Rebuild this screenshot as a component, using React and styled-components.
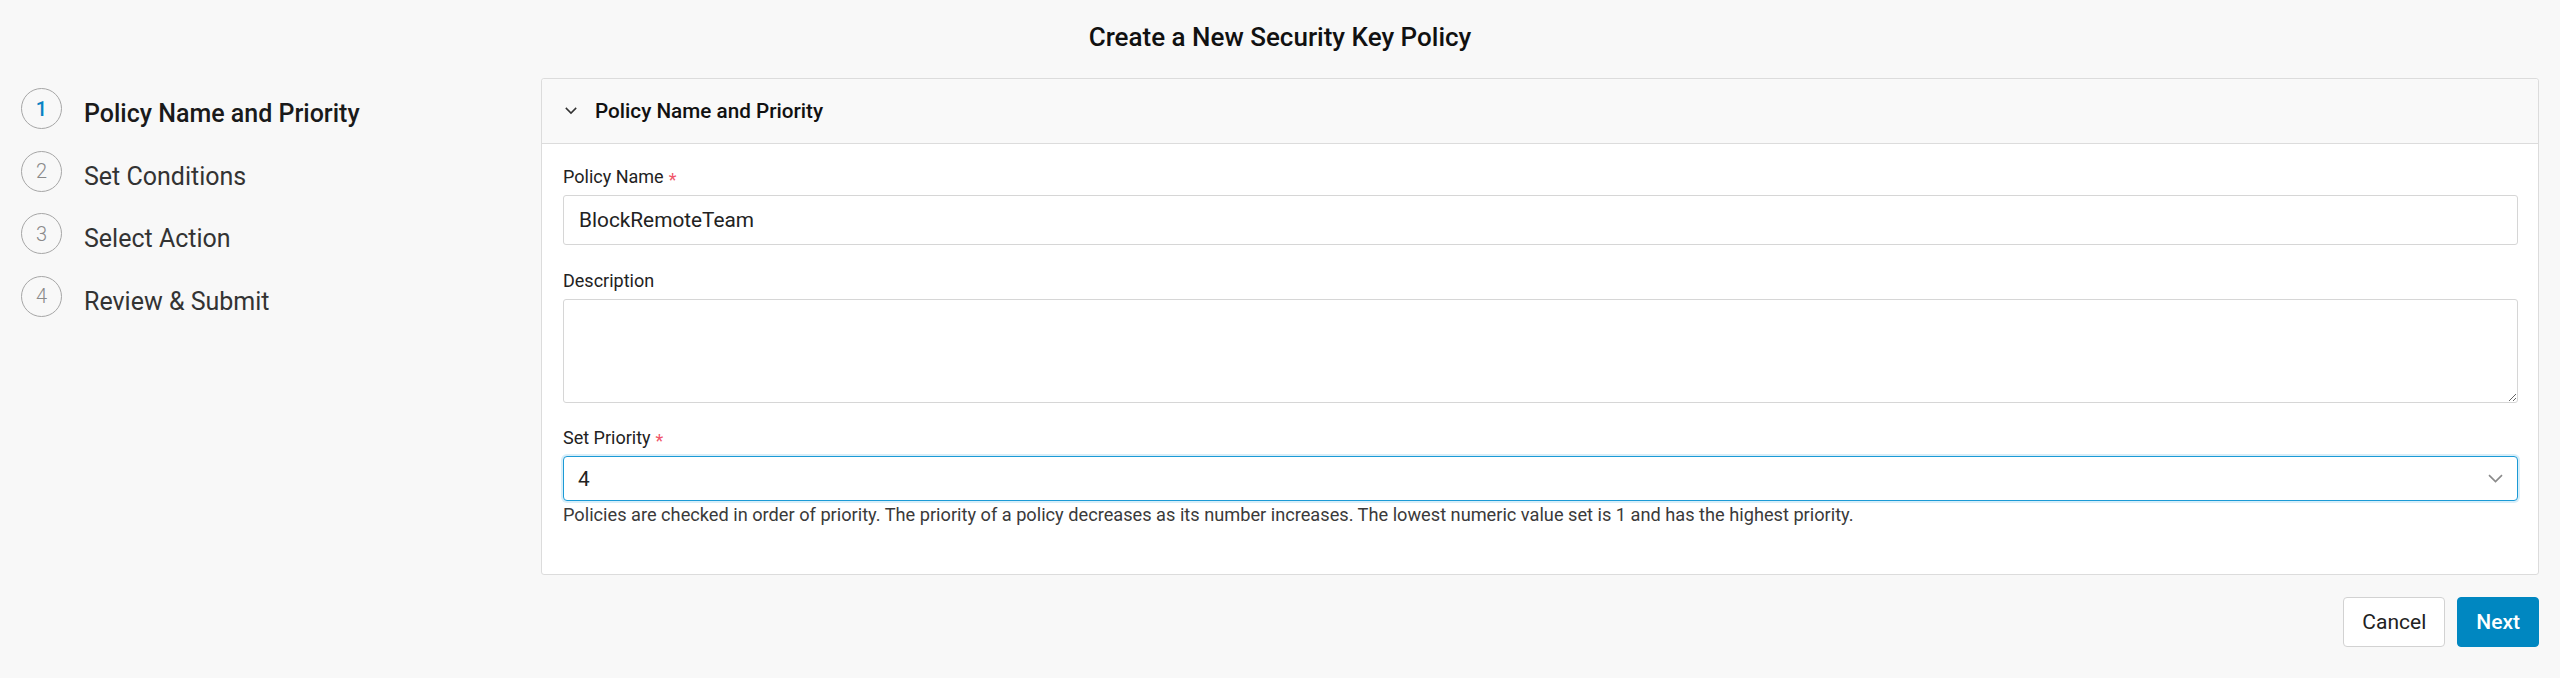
import React from "react";
import styled, { createGlobalStyle } from "styled-components";

const Global = createGlobalStyle`
  * { box-sizing: border-box; }
  html, body { margin: 0; padding: 0; background: #f8f8f8; }
  body { font-family: Roboto, "Liberation Sans", Arial, sans-serif; color: #222; }
`;

const Page = styled.div`
  width: 2560px;
  min-height: 678px;
  background: #f8f8f8;
`;

const TitleBar = styled.header`
  height: 78px;
  display: flex;
  align-items: center;
  justify-content: center;
  padding-bottom: 4px;
`;

const Title = styled.h1`
  margin: 0;
  font-size: 26px;
  font-weight: 500;
  color: #111;
  line-height: 32px;
`;

const Main = styled.div`
  display: grid;
  grid-template-columns: 541px 1fr;
  padding-right: 21px;
`;

const Steps = styled.ol`
  list-style: none;
  margin: 0;
  padding: 10px 0 0 21px;
  display: flex;
  flex-direction: column;
  gap: 21.6px;
`;

const Step = styled.li`
  display: flex;
  align-items: flex-start;
  height: 41px;
  gap: 22px;
  font-size: 25px;
  line-height: 41px;
  color: ${(p) => (p.$active ? "#1a1a1a" : "#333")};
  font-weight: ${(p) => (p.$active ? 500 : 400)};
`;

const StepLabel = styled.span`
  padding-top: 5px;
`;

const StepNum = styled.span`
  width: 41px;
  height: 41px;
  border-radius: 50%;
  border: 1px solid #a6a6a6;
  display: flex;
  align-items: center;
  justify-content: center;
  font-size: 20px;
  line-height: 1;
  font-weight: ${(p) => (p.$active ? 500 : 300)};
  color: ${(p) => (p.$active ? "#0a82c4" : "#8a8a8a")};
  flex: none;
`;

const Right = styled.div`
  display: flex;
  flex-direction: column;
`;

const Panel = styled.section`
  background: #fff;
  border: 1px solid #dcdcdc;
  border-radius: 3px;
`;

const PanelHeader = styled.div`
  height: 65px;
  background: #f9f9f9;
  border-bottom: 1px solid #dcdcdc;
  display: flex;
  align-items: center;
  padding-left: 23px;
  gap: 18px;
  font-size: 20.7px;
  font-weight: 500;
  color: #111;
  border-radius: 3px 3px 0 0;
`;

const PanelBody = styled.div`
  padding: 21px 20px 48px 21px;
  display: flex;
  flex-direction: column;
`;

const Field = styled.div`
  display: flex;
  flex-direction: column;
  gap: 6px;
  margin-bottom: ${(p) => p.$mb || 0}px;
`;

const Label = styled.label`
  font-size: 18px;
  line-height: 24px;
  color: #222;
  display: flex;
  align-items: center;
  gap: 5px;
`;

const Req = styled.span`
  color: #f0566a;
  font-size: 18px;
  line-height: 1;
  position: relative;
  top: 3px;
`;

const TextInput = styled.input`
  height: 50px;
  border: 1px solid #d6d6d6;
  border-radius: 3px;
  padding: 0 15px;
  font-family: inherit;
  font-size: 20.8px;
  color: #222;
  background: #fff;
  outline: none;
`;

const TextArea = styled.textarea`
  height: 104px;
  border: 1px solid #d6d6d6;
  border-radius: 3px;
  font-family: inherit;
  font-size: 20px;
  padding: 10px 15px;
  resize: vertical;
  outline: none;
`;

const SelectBox = styled.div`
  height: 45px;
  border: 1px solid #1b9ad6;
  border-radius: 4px;
  box-shadow: 0 0 0 2px rgba(40, 160, 220, 0.18);
  display: flex;
  align-items: center;
  justify-content: space-between;
  padding: 0 14px 0 14px;
  font-size: 20.8px;
  color: #222;
  background: #fff;
`;

const Help = styled.p`
  margin: 0;
  font-size: 18.2px;
  line-height: 22px;
  color: #3a3a3a;
  padding-top: 3px;
`;

const Actions = styled.div`
  display: flex;
  justify-content: flex-end;
  gap: 12px;
  padding-top: 22px;
`;

const Button = styled.button`
  height: 50px;
  padding: 0 18px;
  border-radius: 4px;
  font-family: inherit;
  font-size: 21px;
  border: 1px solid ${(p) => (p.$primary ? "#0087c1" : "#d2d2d2")};
  background: ${(p) => (p.$primary ? "#0087c1" : "#fff")};
  color: ${(p) => (p.$primary ? "#fff" : "#222")};
  font-weight: ${(p) => (p.$primary ? 500 : 400)};
  cursor: pointer;
`;

const Chevron = ({ size = 12, color = "#333", width = 1.6 }) => (
  <svg width={size} height={size * 0.6} viewBox="0 0 12 7" fill="none">
    <path d="M0.8 0.8 L6 6 L11.2 0.8" stroke={color} strokeWidth={width} />
  </svg>
);

const steps = [
  "Policy Name and Priority",
  "Set Conditions",
  "Select Action",
  "Review & Submit",
];

export default function App() {
  return (
    <Page>
      <Global />
      <TitleBar>
        <Title>Create a New Security Key Policy</Title>
      </TitleBar>
      <Main>
        <Steps>
          {steps.map((s, i) => (
            <Step key={s} $active={i === 0}>
              <StepNum $active={i === 0}>{i + 1}</StepNum>
              <StepLabel>{s}</StepLabel>
            </Step>
          ))}
        </Steps>
        <Right>
          <Panel>
            <PanelHeader>
              <Chevron size={12} color="#333" width={1.5} />
              Policy Name and Priority
            </PanelHeader>
            <PanelBody>
              <Field $mb={24}>
                <Label>
                  Policy Name <Req>*</Req>
                </Label>
                <TextInput defaultValue="BlockRemoteTeam" />
              </Field>
              <Field $mb={23}>
                <Label>Description</Label>
                <TextArea />
              </Field>
              <Field>
                <Label>
                  Set Priority <Req>*</Req>
                </Label>
                <SelectBox>
                  <span>4</span>
                  <Chevron size={15} color="#8a8a8a" width={1.3} />
                </SelectBox>
              </Field>
              <Help>
                Policies are checked in order of priority. The priority of a
                policy decreases as its number increases. The lowest numeric
                value set is 1 and has the highest priority.
              </Help>
            </PanelBody>
          </Panel>
          <Actions>
            <Button>Cancel</Button>
            <Button $primary>Next</Button>
          </Actions>
        </Right>
      </Main>
    </Page>
  );
}
